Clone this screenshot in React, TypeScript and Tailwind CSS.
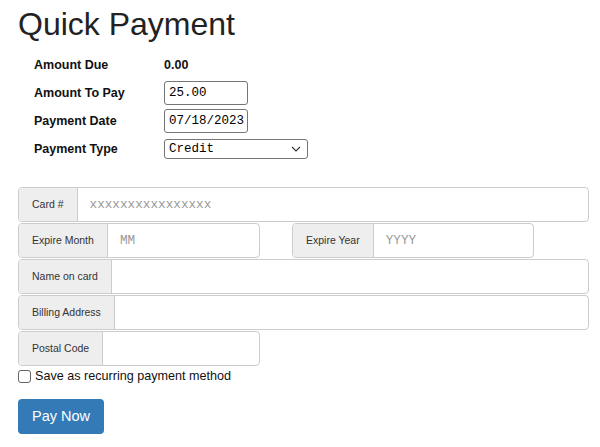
import React from "react";

const mono = "font-['Liberation_Mono','Courier_New',monospace]";

function Group({ label, placeholder, className = "" }: { label: string; placeholder?: string; className?: string }) {
  return (
    <div className={`flex h-[35px] border border-[#cccccc] rounded-[4px] overflow-hidden ${className}`}>
      <div className="bg-[#eeeeee] px-[13px] flex items-center text-[10.5px] text-[#333333] border-r border-[#cccccc] whitespace-nowrap">
        {label}
      </div>
      <div className={`flex-1 flex items-center px-[12px] text-[12.7px] text-[#999999] ${mono}`}>
        {placeholder ?? ""}
      </div>
    </div>
  );
}

export default function App() {
  return (
    <div className="bg-white w-[600px] h-[447px] pl-[18px] pr-[11px] font-['Liberation_Sans',Arial,sans-serif] text-[#222222] overflow-hidden">
      <h1 className="text-[32px] leading-[35px] pt-[7px] font-normal">Quick Payment</h1>
      <div className="ml-[16px] mt-[11px] grid grid-cols-[130px_auto] gap-y-1 text-[12.5px] font-bold text-[#111111]">
        <div className="h-6 flex items-center">Amount Due</div>
        <div className="h-6 flex items-center">0.00</div>
        <div className="h-6 flex items-center">Amount To Pay</div>
        <div className="h-6 flex items-center">
          <div className={`w-[84px] h-[24px] border border-[#767676] rounded-[3px] px-[4px] flex items-center font-normal text-[12.5px] text-black ${mono}`}>25.00</div>
        </div>
        <div className="h-6 flex items-center">Payment Date</div>
        <div className="h-6 flex items-center">
          <div className={`w-[84px] h-[24px] border border-[#767676] rounded-[3px] px-[4px] flex items-center font-normal text-[12.5px] text-black ${mono}`}>07/18/2023</div>
        </div>
        <div className="h-6 flex items-center">Payment Type</div>
        <div className="h-6 flex items-center">
          <div className={`w-[144px] h-[20px] border border-[#767676] rounded-[3px] pl-[4px] pr-[6px] flex items-center justify-between font-normal text-[12.5px] text-black ${mono}`}>
            <span>Credit</span>
            <svg width="10" height="6" viewBox="0 0 10 6" fill="none">
              <path d="M1 1l4 4 4-4" stroke="#333" strokeWidth="1.1" />
            </svg>
          </div>
        </div>
      </div>

      <div className="mt-[26px] flex flex-col gap-px">
        <Group label="Card #" placeholder="xxxxxxxxxxxxxxxx" />
        <div className="flex gap-[32px]">
          <Group label="Expire Month" placeholder="MM" className="w-[242px]" />
          <Group label="Expire Year" placeholder="YYYY" className="w-[242px]" />
        </div>
        <Group label="Name on card" />
        <Group label="Billing Address" />
        <Group label="Postal Code" className="w-[242px]" />
      </div>

      <div className="mt-[2px] h-[17px] flex items-center gap-[4px] text-[12.6px] text-[#111111]">
        <span className="w-[13px] h-[13px] border border-[#666666] rounded-[3px] bg-white inline-block" />
        <span>Save as recurring payment method</span>
      </div>

      <button className="mt-[14px] w-[86px] h-[35px] bg-[#337ab7] rounded-[4px] text-white text-[14.5px] flex items-center justify-center">
        Pay Now
      </button>
    </div>
  );
}
